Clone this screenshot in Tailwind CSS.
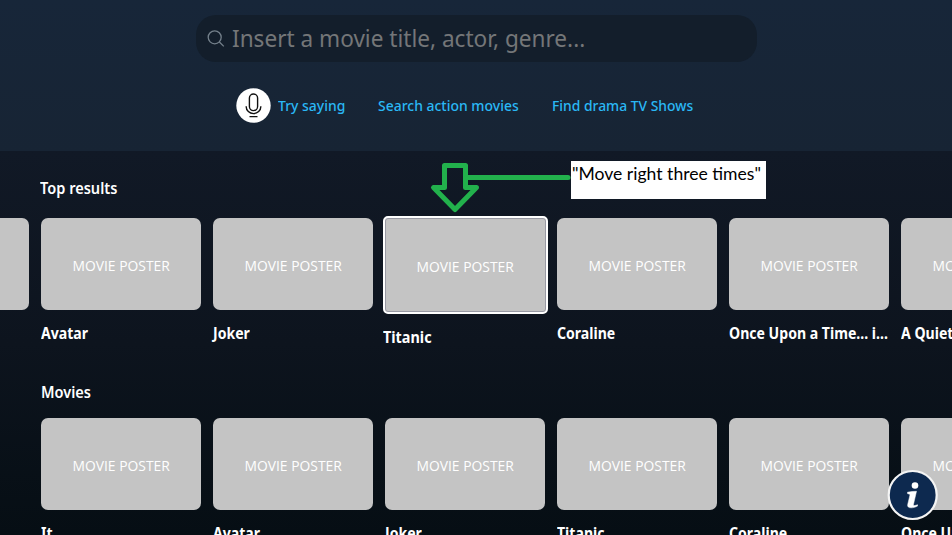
<!DOCTYPE html>
<html lang="en">
<head>
<meta charset="utf-8">
<title>Search</title>
<script src="https://cdn.jsdelivr.net/npm/@tailwindcss/browser@4"></script>
</head>
<body class="h-[535px] w-[952px] overflow-hidden bg-[#070e15] font-['Noto_Sans','Open_Sans',sans-serif] text-white">
<div class="relative flex h-[535px] w-[952px] flex-col overflow-hidden">
  <header class="flex h-[151px] shrink-0 flex-col bg-linear-to-b from-[#172639] to-[#172434] pt-[15px]">
    <div class="ml-[196px] flex h-[47px] w-[561px] items-center rounded-[20px] bg-[#131e2b] pl-[11px]">
      <svg class="h-[18px] w-[18px] shrink-0" viewBox="0 0 18 18" fill="none" stroke="#74808b" stroke-width="1.3"><circle cx="7.7" cy="7.3" r="6.5"/><path d="M12.4 12 L16.8 16.4"/></svg>
      <span class="-mt-[2px] ml-[7px] origin-left scale-x-[0.941] whitespace-nowrap text-[24px] leading-[47px] text-[#747678]">Insert a movie title, actor, genre...</span>
    </div>
    <div class="ml-[236px] mt-[26px] flex h-[35px] items-center text-[15px] font-medium text-[#2ab8f5]">
      <svg class="h-[35px] w-[35px] shrink-0" viewBox="0 0 35 35" fill="none" stroke="#111" stroke-width="1.4"><circle cx="17.5" cy="17.5" r="17.2" fill="#fff" stroke="none"/><rect x="13.4" y="6" width="8.2" height="16.6" rx="4.1"/><path d="M10.2 18.2v.6a7.3 6.8 0 0 0 14.6 0v-.6M13.500 28.600h8"/></svg>
      <div class="ml-[7px] w-[100px] whitespace-nowrap"><span class="inline-block origin-left scale-x-[0.93]">Try saying</span></div>
      <div class="w-[174px] whitespace-nowrap"><span class="inline-block origin-left scale-x-[0.93]">Search action movies</span></div>
      <div class="whitespace-nowrap"><span class="inline-block origin-left scale-x-[0.925]">Find drama TV Shows</span></div>
    </div>
  </header>
  <main class="flex h-[384px] flex-col overflow-hidden bg-linear-to-b from-[#111926] via-[#0d141e] to-[#060e14] pt-[25px]">
    <h2 class="ml-[40px] h-[24px] shrink-0 origin-left scale-x-[0.91] text-[16px] leading-[24px] font-semibold">Top results</h2>
    <div class="-ml-[131px] mt-[18px] flex h-[156px] w-[1364px] shrink-0 gap-[12px] text-[16px] leading-[24px] font-bold" id="top"></div>
    <h2 class="ml-[41px] mt-[6px] h-[24px] shrink-0 origin-left scale-x-[0.91] text-[16px] leading-[24px] font-semibold">Movies</h2>
    <div class="-ml-[131px] mt-[14px] flex h-[130px] w-[1364px] shrink-0 gap-[12px] text-[16px] leading-[24px] font-bold" id="movies"></div>
  </main>
  <svg class="absolute left-[428px] top-[158px] h-[58px] w-[144px]" viewBox="428 158 144 58" fill="none" stroke="#22b14c" stroke-width="5" stroke-linejoin="round" stroke-linecap="round"><path d="M444.5 165.5h21v22h11L455 209.500L433.500 187.500h11z"/><path d="M467 177.500H568"/></svg>
  <div class="absolute left-[571px] top-[161px] h-[38px] w-[195px] bg-white pl-[1px] font-['Lato',sans-serif] text-[18px] leading-[24px] whitespace-nowrap text-black"><span class="inline-block origin-left scale-x-[0.976]">"Move right three times"</span></div>
  <svg class="absolute left-[887px] top-[469px] h-[52px] w-[52px]" viewBox="0 0 52 52"><circle cx="25.700" cy="26" r="24" fill="#0d294f" stroke="#f4f4f4" stroke-width="2.200"/><circle cx="28" cy="16.500" r="3.300" fill="#fff"/><path d="M20.500 23.200c3-.6 6-.9 9-.9l-3 12.900c-.2 1 .2 1.300 1 1.300.9 0 1.800-.3 3-.8v1.400c-2 1.100-4.200 1.700-6.300 1.700-2.700 0-4-1.100-3.500-3.300l2.400-10.100-2.600-.8z" fill="#fff" stroke="#fff" stroke-width=".5"/></svg>
</div>
<template id="card">
  <article class="w-[160px] shrink-0">
    <div data-poster class="flex h-[92px] items-center justify-center rounded-[7px] bg-[#c4c4c4] pt-[3px] font-['Open_Sans',sans-serif] text-[14px] font-normal"><span class="inline-block scale-x-[0.99] whitespace-nowrap">MOVIE POSTER</span></div>
    <h3 class="mt-[11px] whitespace-nowrap"><span data-title class="inline-block origin-left scale-x-[0.88]"></span></h3>
  </article>
</template>
<template id="focused">
  <article class="-mt-[2px] -ml-[2px] -mr-[3px] w-[165px] shrink-0">
    <div class="flex h-[98px] items-center justify-center rounded-[5px] border-[2.500px] border-white bg-[#c4c4c4] pt-[4px] font-['Open_Sans',sans-serif] text-[14px] font-normal inset-ring inset-ring-[#999aa4]"><span class="inline-block scale-x-[0.99] whitespace-nowrap">MOVIE POSTER</span></div>
    <h3 class="mt-[11px] whitespace-nowrap"><span data-title class="inline-block origin-left scale-x-[0.9]"></span></h3>
  </article>
</template>
<script>
function fill(id, titles, focus) {
  titles.forEach((t, i) => {
    const n = document.getElementById(i === focus ? 'focused' : 'card').content.cloneNode(true);
    n.querySelector('[data-title]').textContent = t;
    if (!t) {
      n.querySelector('[data-poster]').textContent = '';
      if (id === 'movies') n.querySelector('article').classList.add('invisible');
    }
    document.getElementById(id).append(n);
  });
}
fill('top', ['', 'Avatar', 'Joker', 'Titanic', 'Coraline', 'Once Upon a Time... i...', 'A Quiet Place'], 3);
fill('movies', ['', 'It', 'Avatar', 'Joker', 'Titanic', 'Coraline', 'Once Upon a Time... i...'], -1);
</script>
</body>
</html>
